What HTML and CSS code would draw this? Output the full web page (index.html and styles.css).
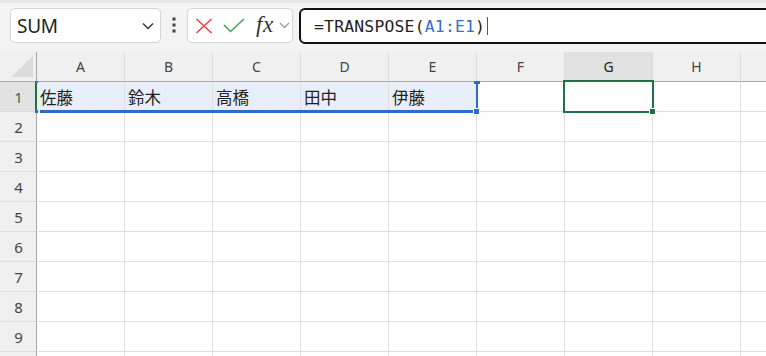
FILE: index.html
```html
<!DOCTYPE html>
<html lang="ja">
<head>
    <meta charset="UTF-8">
    <title>TRANSPOSE</title>
    <link rel="stylesheet" href="styles.css">
</head>
<body>

    <!-- Строка формул -->
    <div class="toolbar">
        <div class="name-box">
            <span class="name-text">SUM</span>
            <svg class="chev" width="12" height="8" viewBox="0 0 12 8"><path d="M1 1.5 L6 6.5 L11 1.5" fill="none" stroke="#333" stroke-width="1.4"/></svg>
        </div>
        <div class="more">
            <svg width="4" height="16" viewBox="0 0 4 16"><rect x="0.5" y="0.5" width="3" height="3" fill="#444"/><rect x="0.5" y="6.5" width="3" height="3" fill="#444"/><rect x="0.5" y="12.5" width="3" height="3" fill="#444"/></svg>
        </div>
        <div class="fx-box">
            <svg class="icon-x" width="18" height="16" viewBox="0 0 18 16"><path d="M1.5 1 L16.5 15 M16.5 1 L1.5 15" stroke="#e8464a" stroke-width="1.6" fill="none"/></svg>
            <svg class="icon-ok" width="22" height="15" viewBox="0 0 22 15"><path d="M1 7 L7.5 13.5 L21 1" stroke="#45a457" stroke-width="1.6" fill="none"/></svg>
            <span class="fx">fx</span>
            <svg class="chev-sm" width="11" height="7" viewBox="0 0 11 7"><path d="M1 1 L5.5 5.5 L10 1" fill="none" stroke="#9a9a9a" stroke-width="1.3"/></svg>
        </div>
        <div class="formula-bar">
            <span class="formula">=TRANSPOSE(<span class="ref">A1:E1</span>)</span><span class="caret"></span>
        </div>
    </div>

    <!-- Лист -->
    <div class="sheet">
        <div class="grid" id="grid"></div>
        <div class="row-mark"></div>
        <div class="range-bottom"></div>
        <div class="range-right"></div>
        <div class="knob knob-tl"></div>
        <div class="knob knob-bl"></div>
        <div class="knob knob-tr"></div>
        <div class="knob knob-br"></div>
        <div class="active-cell"></div>
        <div class="fill-handle"></div>
    </div>

    <script>
        const grid = document.getElementById("grid");
        const cols = ["A", "B", "C", "D", "E", "F", "G", "H", "I"];
        const data = { 1: ["佐藤", "鈴木", "高橋", "田中", "伊藤"] };

        // Заголовки столбцов (I и 10 за краем окна — без подписи)
        const corner = document.createElement("div");
        corner.className = "cell corner";
        grid.appendChild(corner);
        cols.forEach(c => {
            const div = document.createElement("div");
            div.className = "cell col-head" + (c === "G" ? " on" : "");
            if (c !== "I") div.textContent = c;
            grid.appendChild(div);
        });

        // Строки
        for (let r = 1; r <= 10; r++) {
            const head = document.createElement("div");
            head.className = "cell row-head" + (r === 1 ? " on" : "");
            if (r < 10) head.textContent = r;
            grid.appendChild(head);
            cols.forEach((c, i) => {
                const div = document.createElement("div");
                div.className = "cell";
                if (r === 1 && i < 5) div.className += " in-range";
                if (data[r] && data[r][i]) div.textContent = data[r][i];
                grid.appendChild(div);
            });
        }
    </script>

</body>
</html>
```

FILE: styles.css
```css
* {
    box-sizing: border-box;
    margin: 0;
    padding: 0;
}

body {
    font-family: "Noto Sans", "Open Sans", sans-serif;
    background-color: #ffffff;
    color: #222;
    overflow: hidden;
    width: 766px;
    height: 356px;
}

/* Строка формул */
.toolbar {
    height: 52px;
    background-color: #f3f3f3;
    border-top: 3px solid #e7e7eb;
    padding: 5px 0 0 10px;
    display: flex;
    align-items: flex-start;
}

.name-box {
    width: 151px;
    height: 35px;
    background: #fff;
    border: 1px solid #d4d4d4;
    border-radius: 5px;
    display: flex;
    align-items: center;
    justify-content: space-between;
    padding: 0 6px 0 6px;
}

.name-text {
    font-size: 19px;
    color: #222;
    letter-spacing: -0.3px;
}

.more {
    width: 26px;
    height: 35px;
    display: flex;
    align-items: center;
    justify-content: center;
    padding-bottom: 2px;
}

.fx-box {
    width: 106px;
    height: 35px;
    background: #fff;
    border: 1px solid #d4d4d4;
    border-radius: 5px;
    display: flex;
    align-items: center;
    padding: 0 0 0 7px;
}

.icon-x {
    margin-right: 10px;
}

.icon-ok {
    margin-right: 11px;
}

.fx {
    font-family: "Liberation Serif", "DejaVu Serif", serif;
    font-style: italic;
    font-size: 23px;
    color: #333;
    line-height: 1;
    margin-top: -3px;
    margin-right: 5px;
    letter-spacing: 0.5px;
}

.formula-bar {
    flex: 1;
    margin-left: 6px;
    margin-right: -12px;
    height: 36px;
    background: #fff;
    border: 2px solid #111;
    border-radius: 6px;
    display: flex;
    align-items: center;
    padding-left: 13px;
}

.formula {
    font-family: "DejaVu Sans Mono", "Liberation Mono", monospace;
    font-size: 16.4px;
    color: #222;
    letter-spacing: 0.2px;
}

.ref {
    color: #2f72c4;
}

.caret {
    width: 1px;
    height: 18px;
    background: #555;
    margin-left: 2px;
}

/* Лист */
.sheet {
    position: relative;
    height: 304px;
    overflow: hidden;
}

.grid {
    display: grid;
    grid-template-columns: 37px repeat(9, 88px);
    grid-auto-rows: 30px;
    width: 829px;
}

.cell {
    border-right: 1px solid #dedede;
    border-bottom: 1px solid #dedede;
    font-family: "Noto Sans CJK JP", "Noto Sans", sans-serif;
    font-size: 16.5px;
    color: #222;
    padding-left: 3px;
    display: flex;
    align-items: center;
    padding-top: 1px;
}

.corner {
    background: #f0f0f0 linear-gradient(to bottom right, transparent 50%, #dcdcdc 50%) no-repeat right 3px bottom 4px / 21px 21px;
    border-right: 1px solid #a9a9a9;
    border-bottom: 1px solid #a9a9a9;
}

.col-head {
    background: #f0f0f0;
    border-bottom: 1px solid #a9a9a9;
    border-right-color: #dcdcdc;
    font-family: "Noto Sans", sans-serif;
    font-size: 14px;
    color: #444;
    justify-content: center;
    padding: 0;
}

.col-head.on {
    background: #e1e1e1;
    color: #222;
}

.row-head {
    background: #f0f0f0;
    border-right: 1px solid #a9a9a9;
    border-bottom-color: #dcdcdc;
    font-family: "Noto Sans", sans-serif;
    font-size: 15px;
    color: #444;
    justify-content: center;
    padding: 0 0 0 1px;
}

.row-head.on {
    background: #e2e2e2;
    color: #1e7145;
}

.in-range {
    background: #e9eff8;
}

/* Выделение диапазона и активной ячейки */
.row-mark {
    position: absolute;
    left: 35px;
    top: 31px;
    width: 2px;
    height: 27px;
    background: #1e7145;
}

.range-bottom {
    position: absolute;
    left: 40px;
    top: 58px;
    width: 433px;
    height: 3px;
    background: #2f6cc6;
}

.range-right {
    position: absolute;
    left: 476px;
    top: 32px;
    width: 2px;
    height: 26px;
    background: #2f6cc6;
}

.knob {
    position: absolute;
    background: #2f6cc6;
}

.knob-tl {
    left: 35px;
    top: 29px;
    width: 3px;
    height: 2px;
}

.knob-bl {
    left: 35px;
    top: 58px;
    width: 3px;
    height: 3px;
}

.knob-tr {
    left: 474px;
    top: 29px;
    width: 6px;
    height: 3px;
}

.knob-br {
    left: 473px;
    top: 56px;
    width: 7px;
    height: 7px;
    border: 1px solid #fff;
}

.active-cell {
    position: absolute;
    left: 563px;
    top: 28px;
    width: 91px;
    height: 33px;
    border: 2px solid #1e7145;
}

.fill-handle {
    position: absolute;
    left: 649px;
    top: 56px;
    width: 7px;
    height: 7px;
    background: #1e7145;
    border: 1px solid #fff;
}
```
